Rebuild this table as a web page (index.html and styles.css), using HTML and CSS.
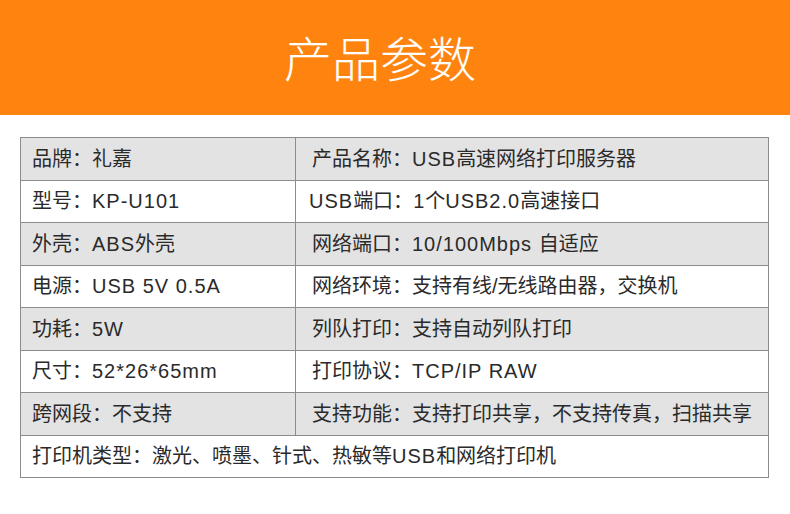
FILE: index.html
```html
<!DOCTYPE html>
<html lang="zh">
<head>
<meta charset="utf-8">
<link rel="stylesheet" href="styles.css">
</head>
<body>
<header class="banner"><h1 class="title">产品参数</h1></header>
<table class="spec">
  <tr class="shade"><td class="c1">品牌：礼嘉</td><td class="c2">产品名称：<span class="en">USB</span>高速网络打印服务器</td></tr>
  <tr><td class="c1">型号：<span class="en">KP-U101</span></td><td class="c2 tight"><span class="en">USB</span>端口：<span class="en">1</span>个<span class="en">USB2.0</span>高速接口</td></tr>
  <tr class="shade"><td class="c1">外壳：<span class="en">ABS</span>外壳</td><td class="c2">网络端口：<span class="en">10/100Mbps </span>自适应</td></tr>
  <tr><td class="c1">电源：<span class="en">USB 5V 0.5A</span></td><td class="c2">网络环境：支持有线/无线路由器，交换机</td></tr>
  <tr class="shade"><td class="c1">功耗：<span class="en">5W</span></td><td class="c2">列队打印：支持自动列队打印</td></tr>
  <tr><td class="c1">尺寸：<span class="en">52*26*65mm</span></td><td class="c2">打印协议：<span class="en">TCP/IP RAW</span></td></tr>
  <tr class="shade"><td class="c1">跨网段：不支持</td><td class="c2">支持功能：支持打印共享，不支持传真，扫描共享</td></tr>
  <tr><td class="c1" colspan="2">打印机类型：激光、喷墨、针式、热敏等<span class="en">USB</span>和网络打印机</td></tr>
</table>
</body>
</html>
```
FILE: styles.css
```css
html, body {
  margin: 0;
  padding: 0;
  background: #ffffff;
  font-family: "Noto Sans CJK SC", "Noto Sans", sans-serif;
}
.banner {
  height: 115px;
  background: #ff840f;
  display: flex;
  align-items: center;
  justify-content: center;
}
.title {
  margin: 0 30px 0 0;
  color: #ffffff;
  font-size: 48px;
  font-weight: 300;
  line-height: 1;
  padding-bottom: 4px;
}
.spec {
  margin: 22px 0 0 20px;
  width: 749px;
  border-collapse: collapse;
  table-layout: fixed;
  color: #2a2a2a;
  font-family: "Liberation Sans", "Noto Sans CJK SC", sans-serif;
  font-size: 20px;
}
.spec tr {
  height: 42.5px;
}
.spec td {
  border: 1px solid #8c8c8c;
  padding: 0 0 0 11px;
  white-space: nowrap;
  line-height: 1;
  vertical-align: middle;
}
.spec .en { letter-spacing: 1px; }
.spec .c1 { width: 263px; }
.spec .c2 { padding-left: 16px; }
.spec .c2.tight { padding-left: 13px; }
.shade td { background: #e3e3e3; }
```
